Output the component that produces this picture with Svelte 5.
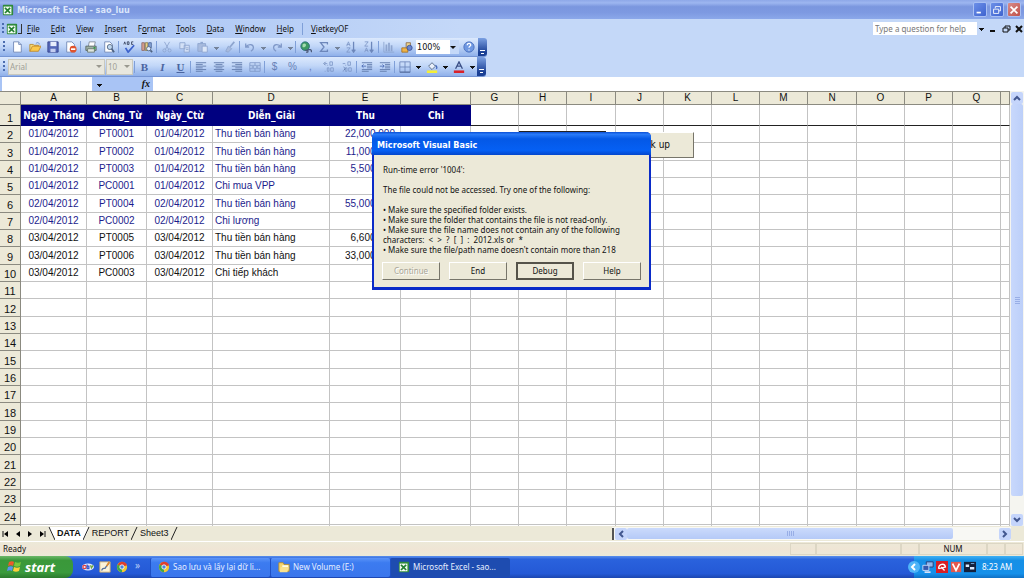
<script lang="ts">
  type Row = { date: string; doc: string; ref: string; note: string; income: string };

  const menus = ['File', 'Edit', 'View', 'Insert', 'Format', 'Tools', 'Data', 'Window', 'Help'];
  const underline: Record<string, number> = { Format: 1 };

  const standardTools = [
    'new', 'open', 'save', 'permission', '|', 'print', 'preview', '|', 'spelling', 'research', '|',
    'cut', 'copy', 'paste', 'v', 'painter', '|', 'undo', 'v', 'redo', 'v', '|',
    'link', 'sum', 'v', 'sortaz', 'sortza', '|', 'chart', 'drawing'
  ];
  const formatTools = [
    '|', 'bold', 'italic', 'underline', '|', 'left', 'center', 'right', 'merge', '|',
    'currency', 'percent', 'comma', 'increase', 'decrease', '|', 'outdent', 'indent', '|',
    'borders', 'V', 'fill', 'V', 'fontcolor', 'V'
  ];

  const letters = 'ABCDEFGHIJKLMNOPQ'.split('');
  const heads = ['Ngày_Tháng', 'Chứng_Từ', 'Ngày_Ctừ', 'Diễn_Giải', 'Thu', 'Chi'];

  const rows: Row[] = [
    { date: '01/04/2012', doc: 'PT0001', ref: '01/04/2012', note: 'Thu tiền bán hàng', income: '22,000,000' },
    { date: '01/04/2012', doc: 'PT0002', ref: '01/04/2012', note: 'Thu tiền bán hàng', income: '11,000,000' },
    { date: '01/04/2012', doc: 'PT0003', ref: '01/04/2012', note: 'Thu tiền bán hàng', income: '5,500,000' },
    { date: '01/04/2012', doc: 'PC0001', ref: '01/04/2012', note: 'Chi mua VPP', income: '' },
    { date: '02/04/2012', doc: 'PT0004', ref: '02/04/2012', note: 'Thu tiền bán hàng', income: '55,000,000' },
    { date: '02/04/2012', doc: 'PC0002', ref: '02/04/2012', note: 'Chi lương', income: '' },
    { date: '03/04/2012', doc: 'PT0005', ref: '03/04/2012', note: 'Thu tiền bán hàng', income: '6,600,000' },
    { date: '03/04/2012', doc: 'PT0006', ref: '03/04/2012', note: 'Thu tiền bán hàng', income: '33,000,000' },
    { date: '03/04/2012', doc: 'PC0003', ref: '03/04/2012', note: 'Chi tiếp khách', income: '' }
  ];
  const blank: Row = { date: '', doc: '', ref: '', note: '', income: '' };
  const sheetRows = Array.from({ length: 23 }, (_, i) => rows[i] ?? blank);
  const spare = Array.from({ length: 12 });

  const tasks = [
    { icon: 'chrome', text: 'Sao lưu và lấy lại dữ li...', active: false },
    { icon: 'folder', text: 'New Volume (E:)', active: false },
    { icon: 'excel', text: 'Microsoft Excel - sao...', active: true }
  ];
</script>

{#snippet icon(name: string)}
  <svg class="icon" viewBox="0 0 14 14" aria-hidden="true">
    {#if name === 'excel'}
      <rect x="1" y="1" width="12" height="12" rx="1" fill="#2f8a3c" />
      <rect x="2" y="3" width="9" height="9" fill="#f2fbf2" />
      <path d="M3.500 4.500l6 6M9.500 4.500l-6 6" stroke="#258032" stroke-width="2" />
    {:else if name === 'new'}
      <path d="M3 1h6l3 3v9H3z" fill="#fff" stroke="#6c84b4" />
      <path d="M9 1v3h3" fill="#cddcf4" stroke="#6c84b4" />
    {:else if name === 'open'}
      <path d="M1 12V4h4l1 1h5v2" fill="#f7dc7a" stroke="#b98a2a" />
      <path d="M1 12l3-6h10l-3 6z" fill="#fbc94b" stroke="#c0882a" />
      <path d="M8 3c2-2 4-1 4 1" fill="none" stroke="#5b84c4" />
    {:else if name === 'save'}
      <path d="M1 1h12v12H1z" fill="#5468b8" stroke="#33408a" />
      <path d="M4 1h7v5H4z" fill="#e8eefc" />
      <path d="M4 9h6v4H4z" fill="#c3cdf0" />
    {:else if name === 'permission'}
      <path d="M2 1h6l3 3v9H2z" fill="#fff" stroke="#6c84b4" />
      <circle cx="9.500" cy="9.500" r="4" fill="#e0532d" />
      <path d="M7 9.500h5" stroke="#fff" stroke-width="2" />
    {:else if name === 'print'}
      <path d="M4 6l1-5h7l-1 5" fill="#fff" stroke="#7b8794" />
      <path d="M1 6h12v5H1z" fill="#9fb1a5" stroke="#56655f" />
      <path d="M3 9h8v4H3z" fill="#dfe7df" stroke="#68766e" />
      <path d="M10 8h2" stroke="#2fa044" stroke-width="2" />
    {:else if name === 'preview'}
      <path d="M2 1h6l3 3v9H2z" fill="#fff" stroke="#6c84b4" />
      <circle cx="8" cy="7" r="3" fill="#bfd7ee" stroke="#4e6280" />
      <path d="M10 9l3 4" stroke="#4e6280" stroke-width="2" />
    {:else if name === 'spelling'}
      <path d="M1 4l1-3 1 3M5 1v3h2V1zM12 1h-2v3h2" fill="none" stroke="#35405c" />
      <path d="M3 8l3 5 7-8" fill="none" stroke="#3c62cc" stroke-width="2" />
    {:else if name === 'research'}
      <path d="M1 2h3v9H1z" fill="#d9a08f" stroke="#8b6a6a" />
      <path d="M5 2h3v9H5z" fill="#e9d089" stroke="#8b7d4b" />
      <path d="M9 2h3v6H9z" fill="#8ba9dc" stroke="#47639a" />
      <circle cx="9" cy="9" r="2.500" fill="#e4eefb" stroke="#4e6280" />
      <path d="M11 11l2 2" stroke="#4e6280" stroke-width="2" />
    {:else if name === 'cut'}
      <path d="M4 1l5 9M10 1L5 10" stroke="#8ea5cf" fill="none" />
      <circle cx="4" cy="11" r="1.800" fill="none" stroke="#8ea5cf" />
      <circle cx="10" cy="11" r="1.800" fill="none" stroke="#8ea5cf" />
    {:else if name === 'copy'}
      <path d="M1 2h6v7H1zM6 5h6v8H6z" fill="#d3e0f6" stroke="#8ea5cf" />
      <path d="M8 8h3M8 10h3" stroke="#8ea5cf" />
    {:else if name === 'paste'}
      <path d="M1 3h9v9H1z" fill="#a8bbde" stroke="#8ea5cf" />
      <path d="M4 1h3v2H4z" fill="#8ea5cf" />
      <path d="M6 6h6v7H6z" fill="#dce7f8" stroke="#8ea5cf" />
    {:else if name === 'painter'}
      <path d="M12 1L7 7" stroke="#8ea5cf" stroke-width="2" />
      <path d="M5 6l4 3-4 4-3-1z" fill="#a8bbde" stroke="#8ea5cf" />
    {:else if name === 'undo'}
      <path d="M2 3v4h4M2 7c3-4 9-4 9 1 0 2-1 3-3 4" fill="none" stroke="#7f98c8" stroke-width="1.500" />
    {:else if name === 'redo'}
      <path d="M12 3v4H8M12 7C9 3 3 3 3 8c0 2 1 3 3 4" fill="none" stroke="#7f98c8" stroke-width="1.500" />
    {:else if name === 'link'}
      <circle cx="6" cy="6" r="5" fill="#3e9a63" stroke="#286c7c" />
      <path d="M3 4c2-2 4-1 4 1S4 8 3 7z" fill="#a5dcb0" />
      <path d="M6 11h3a2 2 0 010 2H7M9 10h3a2 2 0 011 3" fill="none" stroke="#4c5a78" stroke-width="1.500" />
    {:else if name === 'sum'}
      <path d="M11 4V2H3l4 5-4 5h8v-2" fill="none" stroke="#6d87bb" stroke-width="1.500" />
    {:else if name === 'sortaz' || name === 'sortza'}
      <path d={name === 'sortaz' ? 'M2 6l2-5 2 5M2 4h3M2 8h4l-4 5h4' : 'M2 1h4L2 6h4M2 13l2-5 2 5M3 11h3'} fill="none" stroke="#7f98c8" />
      <path d="M10 1v11M8 10l2 3 2-3" fill="none" stroke="#6d87bb" stroke-width="1.500" />
    {:else if name === 'chart'}
      <path d="M1 1v12h12" fill="none" stroke="#8ea5cf" />
      <path d="M4 4v8M7 2v10M10 5v7" stroke="#8ea5cf" stroke-width="2" />
    {:else if name === 'drawing'}
      <path d="M1 8h7v5H1z" fill="#f0b449" stroke="#a56f1e" />
      <path d="M6 2h5v6H6z" fill="#efd48b" stroke="#8b6d4a" />
      <circle cx="10" cy="8" r="3" fill="#6a86cf" stroke="#3c5196" />
    {:else if name === 'help'}
      <circle cx="7" cy="7" r="6" fill="#6f98e2" stroke="#4a6fbb" />
      <path d="M5 5c0-3 4-3 4 0 0 1-2 1-2 3M7 10v1" fill="none" stroke="#fff" stroke-width="1.500" />
    {:else if name === 'left' || name === 'center' || name === 'right'}
      <path d="M1 2h12M1 6h12M1 10h12" stroke="#5f78aa" />
      <path d={name === 'left' ? 'M1 4h8M1 8h8M1 12h8' : name === 'center' ? 'M3 4h8M3 8h8M3 12h8' : 'M5 4h8M5 8h8M5 12h8'} stroke="#5f78aa" />
    {:else if name === 'merge'}
      <path d="M1 2h12v10H1zM1 5h12M1 9h12M7 2v3M7 9v3" fill="none" stroke="#7f98c8" />
      <path d="M3 7h3M11 7H8" stroke="#5f78aa" />
    {:else if name === 'increase' || name === 'decrease'}
      <path d="M8 1h3v4H8zM5 5h1M2 3h3M9 8h3v4H9zM5 8h2v4H5zM2 12h1" fill="none" stroke="#7f98c8" />
      <path d={name === 'increase' ? 'M3 1L1 3l2 2' : 'M3 7l2 2-2 2'} fill="none" stroke="#5f78aa" />
    {:else if name === 'outdent' || name === 'indent'}
      <path d="M1 2h12M7 4h6M7 6h6M7 8h6M1 10h12M1 12h8" stroke="#5f78aa" />
      <path d={name === 'outdent' ? 'M6 6H1M3 4L1 6l2 2' : 'M1 6h5M4 4l2 2-2 2'} fill="none" stroke="#4a69b4" />
    {:else if name === 'borders'}
      <path d="M1 1h12v12H1zM7 1v12M1 7h12" fill="none" stroke="#6d87bb" />
      <path d="M1 13h12" stroke="#4a5f90" />
    {:else if name === 'fill'}
      <path d="M3 6l4-4 4 4-4 4z" fill="#e9f0fb" stroke="#4e6280" />
      <path d="M11 5c2 1 2 3 1 4" fill="none" stroke="#3f63b8" stroke-width="1.500" />
      <path d="M1 11h12v3H1z" fill="#f4ee36" />
    {:else if name === 'fontcolor'}
      <path d="M3 9l4-8 4 8M5 6h4" fill="none" stroke="#3b4f86" stroke-width="1.500" />
      <path d="M1 11h12v3H1z" fill="#d8202a" />
    {:else if name === 'chrome'}
      <circle cx="7" cy="7" r="6" fill="#f2c832" />
      <path d="M7 7L2 4a6 6 0 0110-1l1 2z" fill="#dd3f2f" />
      <path d="M7 7v6A6 6 0 012 4z" fill="#3da64c" />
      <circle cx="7" cy="7" r="2.500" fill="#4b83e0" stroke="#fff" />
    {:else if name === 'folder'}
      <path d="M1 2h5l1 2h6v8H1z" fill="#f4d56c" stroke="#b48c30" />
      <path d="M5 5h7v5H5z" fill="#fffbe4" />
      <path d="M3 7h9l-1 6H2z" fill="#f9e28e" />
    {:else if name === 'ebay'}
      <ellipse cx="7" cy="7" rx="7" ry="4" fill="#e6ebff" />
      <circle cx="3" cy="7" r="2" fill="none" stroke="#e04040" stroke-width="1.500" />
      <path d="M6 4v5h2V6H6" fill="none" stroke="#3058d0" stroke-width="1.500" />
      <path d="M10 5l1 3 2-3" fill="none" stroke="#69a63a" stroke-width="1.500" />
    {:else if name === 'pencil'}
      <path d="M1 1h12v12H1z" fill="#fbf3da" stroke="#c8a96c" />
      <path d="M3 11c2-5 4 0 5-4l4-5" fill="none" stroke="#56709c" stroke-width="1.500" />
      <path d="M9 6l3-5" stroke="#e28b2c" stroke-width="2" />
    {:else if name === 'network'}
      <path d="M5 1h8v6H5z" fill="#8eb6ee" stroke="#1e3570" />
      <path d="M1 5h7v6H1z" fill="#3458ac" stroke="#d5e2fa" />
      <path d="M3 13h7" stroke="#d5e2fa" stroke-width="2" />
    {:else if name === 'umbrella'}
      <path d="M0 0h14v14H0z" fill="#d81e24" />
      <path d="M3 9c0-6 7-7 8-2L3 9M6 7l4 4" fill="none" stroke="#fff" stroke-width="1.500" />
    {:else if name === 'vkey'}
      <path d="M1 1h12v12H1z" fill="#e4574c" />
      <path d="M3 3l4 8 4-8" fill="none" stroke="#fff" stroke-width="2" />
    {:else if name === 'volume'}
      <path d="M0 1h14v12H0z" fill="#14203c" />
      <path d="M2 4h4v3H2zM7 7h5v3H7z" fill="#d8e8fc" />
      <path d="M8 3h4" stroke="#7fc0f2" />
    {/if}
  </svg>
{/snippet}

{#snippet tools(list: string[])}
  {#each list as tool}
    {#if tool === '|'}
      <span class="sep"></span>
    {:else if tool === 'v' || tool === 'V'}
      <button class="drop" class:dim={tool === 'v'} aria-label="More"></button>
    {:else}
      <button class="tool {tool}" aria-label={tool}>
        {#if tool === 'bold'}B{:else if tool === 'italic'}I{:else if tool === 'underline'}U{:else if tool === 'currency'}${:else if tool === 'percent'}%{:else if tool === 'comma'},{:else}{@render icon(tool)}{/if}
      </button>
    {/if}
  {/each}
{/snippet}

{#snippet chevron(d: string)}
  <svg class="chevron" viewBox="0 0 8 8" aria-hidden="true"><path {d} fill="none" stroke="#42578f" stroke-width="2" /></svg>
{/snippet}

<div class="screen">
  <header class="titlebar">
    {@render icon('excel')}
    <h1>Microsoft Excel - sao_luu</h1>
    <button class="win" aria-label="Minimize"><svg viewBox="0 0 14 14"><path d="M3 10h5" stroke="#fff" stroke-width="2" /></svg></button>
    <button class="win" aria-label="Restore"><svg viewBox="0 0 14 14"><path d="M5 5V3h6v5H9M3 6h6v5H3z" fill="none" stroke="#fff" /></svg></button>
    <button class="win close" aria-label="Close"><svg viewBox="0 0 14 14"><path d="M3 3l8 8M11 3l-8 8" stroke="#fff" stroke-width="2" /></svg></button>
  </header>

  <nav class="menubar">
    <span class="grip"></span>
    {@render icon('excel')}
    <span class="bracket"></span>
    {#each menus as menu}
      {@const at = underline[menu] ?? 0}
      <button class="menu">{menu.slice(0, at)}<u>{menu[at]}</u>{menu.slice(at + 1)}</button>
    {/each}
    <span class="sep"></span>
    <button class="menu"><u>V</u>ietkeyOF</button>
    <input class="ask" aria-label="Type a question for help" placeholder="Type a question for help" />
    <button class="drop" aria-label="Recent questions"></button>
    <button class="mini" aria-label="Minimize workbook"><svg viewBox="0 0 10 10"><path d="M2 7h5" stroke="#111" stroke-width="2" /></svg></button>
    <button class="mini" aria-label="Restore workbook"><svg viewBox="0 0 10 10"><path d="M4 4V2h5v4H7M2 4h5v4H2z" fill="none" stroke="#111" /></svg></button>
    <button class="mini" aria-label="Close workbook"><svg viewBox="0 0 10 10"><path d="M2 2l6 6M8 2L2 8" stroke="#111" stroke-width="2" /></svg></button>
  </nav>

  <div class="bars">
    <div class="toolbar">
      <span class="grip"></span>
      {@render tools(standardTools)}
      <span class="combo zoom"><select aria-label="Zoom"><option>100%</option></select></span>
      <button class="tool" aria-label="help">{@render icon('help')}</button>
      <button class="end" aria-label="Toolbar options"></button>
    </div>
    <div class="toolbar">
      <span class="grip"></span>
      <span class="combo font"><select aria-label="Font" disabled><option>Arial</option></select></span>
      <span class="combo size"><select aria-label="Font size" disabled><option>10</option></select></span>
      {@render tools(formatTools)}
      <button class="end" aria-label="Toolbar options"></button>
    </div>
  </div>

  <div class="formula">
    <input class="namebox" aria-label="Name box" />
    <button class="drop" aria-label="Names"></button>
    <button class="fx" aria-label="Insert function">fx</button>
    <input class="entry" aria-label="Formula" />
  </div>

  <main class="work">
    <div class="sheet">
      <table>
        <colgroup>
          <col class="w-row" /><col class="w-a" /><col class="w-b" /><col class="w-a" /><col class="w-d" /><col class="w-e" /><col class="w-f" />
          {#each letters.slice(6) as _, i}<col class={i % 5 === 2 ? 'w-n wide' : 'w-n'} />{/each}
          <col />
        </colgroup>
        <thead>
          <tr><th></th>{#each letters as letter}<th scope="col">{letter}</th>{/each}<th></th></tr>
        </thead>
        <tbody>
          <tr class="heads">
            <th scope="row">1</th>
            {#each heads as head}<td class="head">{head}</td>{/each}
            {#each spare as _}<td></td>{/each}
          </tr>
          {#each sheetRows as row, i}
            <tr class:saved={i < 6}>
              <th scope="row">{i + 2}</th>
              <td class="mid">{row.date}</td>
              <td class="mid">{row.doc}</td>
              <td class="mid">{row.ref}</td>
              <td>{row.note}</td>
              <td class="num">{row.income}</td>
              <td></td>
              {#each spare as _}<td></td>{/each}
            </tr>
          {/each}
          <tr>
            <th></th>
            {#each letters as _}<td></td>{/each}
            <td></td>
          </tr>
        </tbody>
      </table>
      <button class="macro restore" aria-label="Restore"></button>
      <button class="macro backup">Back up</button>
    </div>
    <div class="vscroll">
      <button class="arrow" aria-label="Scroll up">{@render chevron('M1 6l3-3 3 3')}</button>
      <span class="thumb"></span>
      <span class="track"></span>
      <button class="arrow" aria-label="Scroll down">{@render chevron('M1 2l3 3 3-3')}</button>
    </div>
  </main>

  <div class="tabs">
    <button class="nav" aria-label="First sheet"><svg viewBox="0 0 8 8"><path d="M1 1v6" stroke="#111" /><path d="M6 1v6L2 4z" /></svg></button>
    <button class="nav" aria-label="Previous sheet"><svg viewBox="0 0 8 8"><path d="M6 1v6L2 4z" /></svg></button>
    <button class="nav" aria-label="Next sheet"><svg viewBox="0 0 8 8"><path d="M2 1v6l4-3z" /></svg></button>
    <button class="nav" aria-label="Last sheet"><svg viewBox="0 0 8 8"><path d="M7 1v6" stroke="#111" /><path d="M2 1v6l4-3z" /></svg></button>
    <svg class="slant" viewBox="0 0 7 13"><path d="M0 0h7v13z" fill="#fff" /><path d="M1 0l6 13" stroke="#222" /></svg>
    <button class="tab current">DATA</button>
    <svg class="slant" viewBox="0 0 7 13"><path d="M0 0h7L1 13H0z" fill="#fff" /><path d="M6 0L0 13" stroke="#222" /></svg>
    <button class="tab">REPORT</button>
    <svg class="slant" viewBox="0 0 7 13"><path d="M6 0L0 13" stroke="#222" /></svg>
    <button class="tab">Sheet3</button>
    <svg class="slant" viewBox="0 0 7 13"><path d="M6 0L0 13" stroke="#222" /></svg>
    <div class="hscroll">
      <span class="split"></span>
      <button class="arrow" aria-label="Scroll left">{@render chevron('M6 1L3 4l3 3')}</button>
      <span class="thumb"></span>
      <span class="track"></span>
      <button class="arrow" aria-label="Scroll right">{@render chevron('M2 1l3 3-3 3')}</button>
    </div>
  </div>

  <footer class="status">
    <span class="ready">Ready</span>
    <span class="cell c1"></span><span class="cell c2"></span><span class="cell c3"></span>
    <span class="cell c4">NUM</span><span class="cell c3"></span><span class="cell c3"></span>
  </footer>

  <div class="taskbar">
    <button class="start">
      <svg viewBox="0 0 16 16" aria-hidden="true">
        <path d="M2 3c2-1 4-1 5 0L6 7C5 6 3 6 1 7z" fill="#ee5a2c" />
        <path d="M8 3c2 1 4 1 6 0l-1 4c-2 1-4 1-6 0z" fill="#7cc83c" />
        <path d="M1 8c2-1 4-1 5 0l-1 4c-1-1-3-1-5 0z" fill="#5a94f0" />
        <path d="M7 8c2 1 4 1 6 0l-1 4c-2 1-4 1-6 0z" fill="#fbd03a" />
      </svg>
      start
    </button>
    <div class="quick">
      {@render icon('ebay')}{@render icon('pencil')}{@render icon('chrome')}<span class="more">»</span>
    </div>
    {#each tasks as task}
      <button class="task" class:active={task.active}>{@render icon(task.icon)}<span>{task.text}</span></button>
    {/each}
    <div class="tray">
      <button class="expand" aria-label="Show hidden icons"><svg viewBox="0 0 12 12"><circle cx="6" cy="6" r="6" fill="#4fb4f8" /><path d="M7 3L4 6l3 3" fill="none" stroke="#fff" stroke-width="2" /></svg></button>
      {@render icon('network')}{@render icon('umbrella')}{@render icon('vkey')}{@render icon('volume')}
      <time>8:23 AM</time>
    </div>
  </div>

  <div class="dialog" role="dialog" aria-labelledby="dialog-title">
    <h2 id="dialog-title">Microsoft Visual Basic</h2>
    <div class="message">
      <p>Run-time error '1004':</p>
      <p>The file could not be accessed. Try one of the following:</p>
      <p>
        • Make sure the specified folder exists.<br />
        • Make sure the folder that contains the file is not read-only.<br />
        • Make sure the file name does not contain any of the following<br />
        characters:&nbsp; &lt; &nbsp;&gt; &nbsp;? &nbsp;[ &nbsp;] &nbsp;: &nbsp;2012.xls or &nbsp;*<br />
        • Make sure the file/path name doesn't contain more than 218
      </p>
    </div>
    <div class="actions">
      <button disabled>Continue</button>
      <button>End</button>
      <button class="default">Debug</button>
      <button>Help</button>
    </div>
  </div>
</div>

<style>
  :global(body) {
    margin: 0;
  }

  .screen {
    --ui: "Noto Sans", "Open Sans", sans-serif;
    --strong: "DejaVu Sans Condensed", "DejaVu Sans", sans-serif;
    --cells: "Liberation Sans", Arial, sans-serif;
    --face: #ece9d8;
    position: relative;
    display: flex;
    flex-direction: column;
    height: 100vh;
    overflow: hidden;
    background: #fff;
    color: #111;
    font: 8px/12px var(--ui);
  }

  button,
  input,
  select {
    box-sizing: border-box;
    margin: 0;
    padding: 0;
    border: 0;
    border-radius: 0;
    background: none;
    color: inherit;
    font: inherit;
  }

  svg {
    display: block;
  }

  .icon {
    flex: none;
    width: 12px;
    height: 12px;
  }

  .titlebar {
    display: flex;
    align-items: center;
    gap: 3px;
    height: 19px;
    padding: 0 3px 0 2px;
    background: linear-gradient(#8ea8e8, #9db6f0 15%, #7b97df 35%, #7d99e1 65%, #8ba8ea);
  }

  h1 {
    flex: 1;
    margin: 0;
    color: #dbe6fb;
    font: bold 9px/14px var(--strong);
  }

  .win {
    width: 14px;
    height: 15px;
    border: 1px solid #a9c0f4;
    border-radius: 2px;
    background: linear-gradient(135deg, #6c8fe8, #3e63cf);
  }

  .win.close {
    background: linear-gradient(135deg, #d88c88, #c0504a);
  }

  .menubar {
    display: flex;
    align-items: center;
    height: 19px;
    padding-left: 1px;
    background: linear-gradient(90deg, #a4c0f3, #c4d8f8 45%);
  }

  .grip {
    width: 2px;
    height: 12px;
    margin: 0 2px 0 1px;
    background: repeating-linear-gradient(#4a6cb0 0 2px, transparent 2px 4px);
  }

  .bracket {
    width: 3px;
    height: 9px;
    border: solid #333;
    border-width: 0 1px 1px 0;
  }

  .menu {
    margin-left: 11px;
  }

  .bracket + .menu {
    margin-left: 5px;
  }

  .sep {
    flex: none;
    width: 1px;
    height: 12px;
    background: #7f9fd8;
  }

  .menubar .sep {
    margin-left: 8px;
  }

  .sep + .menu {
    margin-left: 8px;
  }

  .ask {
    width: 104px;
    height: 13px;
    margin-left: auto;
    padding: 0 2px;
    background: #fff;
  }

  .ask::placeholder {
    color: #777;
    opacity: 1;
  }

  .drop {
    flex: none;
    width: 8px;
    height: 13px;
    background: linear-gradient(#111, #111) center 6px / 5px 1px no-repeat, linear-gradient(#111, #111) center 7px / 3px 1px no-repeat,
      linear-gradient(#111, #111) center 8px / 1px 1px no-repeat;
  }

  .drop.dim {
    opacity: 0.4;
  }

  .mini {
    width: 13px;
    padding-left: 3px;
  }

  .mini svg {
    width: 10px;
    height: 10px;
  }

  .bars {
    background: #c4d8f8;
  }

  .toolbar {
    display: flex;
    align-items: center;
    gap: 1px;
    width: max-content;
    height: 19px;
    padding-left: 2px;
    border-bottom: 1px solid #7595d4;
    border-radius: 0 3px 3px 0;
    background: linear-gradient(#dce9fd, #c2d7f8 45%, #8fb0ea);
    box-sizing: border-box;
  }

  .toolbar + .toolbar {
    height: 20px;
  }

  .tool {
    display: grid;
    place-items: center;
    flex: none;
    width: 17px;
    height: 16px;
    color: #6580b5;
    font: 10px/14px var(--cells);
  }

  .bold,
  .italic,
  .underline {
    color: #4a64a0;
    font: bold 11px/14px "Liberation Serif", serif;
  }

  .italic {
    font-style: italic;
  }

  .underline {
    text-decoration: underline;
  }

  .end {
    align-self: stretch;
    width: 9px;
    border-radius: 0 3px 3px 0;
    background: linear-gradient(#fff, #fff) center 12px / 5px 1px no-repeat, linear-gradient(#fff, #fff) center 15px / 3px 1px no-repeat,
      linear-gradient(#7ba0e2, #1a3f94 80%);
  }

  .combo {
    position: relative;
    flex: none;
    height: 14px;
  }

  .combo::after {
    content: "";
    position: absolute;
    top: 6px;
    right: 3px;
    border: solid transparent;
    border-width: 3px 3px 0;
    border-top-color: #111;
    pointer-events: none;
  }

  .combo select {
    display: block;
    width: 100%;
    height: 100%;
    padding-left: 1px;
    appearance: none;
    border: 1px solid #c9c8bd;
    background: #e8e7de;
    color: #a09f97;
    opacity: 1;
  }

  .font,
  .size {
    height: 16px;
  }

  .font::after,
  .size::after {
    border-top-color: #9a998f;
  }

  .font {
    width: 97px;
  }

  .size {
    width: 27px;
  }

  .zoom {
    width: 43px;
  }

  .zoom select {
    border: 0;
    background: linear-gradient(90deg, #fff 34px, #c4d8f8 34px);
    color: #111;
    font: 9px/14px var(--strong);
  }

  .formula {
    display: flex;
    align-items: center;
    height: 14px;
    padding-left: 2px;
    background: #a9c4f5;
  }

  .namebox {
    width: 90px;
    height: 14px;
    background: #fff;
  }

  .formula .drop {
    margin-left: 3px;
  }

  .fx {
    width: 50px;
    padding-right: 3px;
    text-align: right;
    font: italic bold 10px/14px "Liberation Serif", serif;
  }

  .entry {
    flex: 1;
    height: 14px;
    background: #fff;
  }

  .work {
    display: flex;
    flex: 1;
    min-height: 0;
  }

  .sheet {
    position: relative;
    flex: 1;
    overflow: hidden;
    border-top: 1px solid #8b8a80;
  }

  table {
    width: 100%;
    table-layout: fixed;
    border-collapse: separate;
    border-spacing: 0;
    font: 10px/14px var(--cells);
  }

  .w-row {
    width: 21px;
  }

  .w-a {
    width: 66px;
  }

  .w-b {
    width: 60px;
  }

  .w-d {
    width: 117px;
  }

  .w-e {
    width: 71px;
  }

  .w-f {
    width: 70px;
  }

  .w-n {
    width: 48px;
  }

  .w-n.wide {
    width: 49px;
  }

  td,
  th {
    box-sizing: border-box;
    height: 17px;
    padding: 0 2px;
    border: solid #c3c3c3;
    border-width: 0 1px 1px 0;
    white-space: nowrap;
    line-height: 14px;
  }

  th {
    padding: 0;
    border-color: #8b8a80;
    background: var(--face);
    font: 11px/13px var(--cells);
    text-align: center;
    vertical-align: bottom;
  }

  tbody tr:nth-child(3n) > * {
    height: 18px;
  }

  thead th {
    height: 13px;
    font-size: 10px;
    line-height: 12px;
  }

  tbody .heads > * {
    height: 21px;
    border-bottom-color: #222;
  }

  .head {
    border: 0;
    background: #000080;
    color: #fff;
    font: bold 10px/14px var(--strong);
    text-align: center;
  }

  .saved td {
    color: #1c1c8c;
  }

  .mid {
    text-align: center;
  }

  .num {
    padding-right: 5px;
    text-align: right;
  }

  .macro {
    position: absolute;
    top: 40px;
    height: 26px;
    border: 1px solid;
    border-color: #fff #77756a #77756a #fff;
    background: var(--face);
    font: 10px/14px var(--strong);
  }

  .restore {
    top: 39px;
    left: 519px;
    width: 87px;
    border-color: #222;
  }

  .backup {
    left: 610px;
    width: 84px;
  }

  .vscroll {
    display: flex;
    flex-direction: column;
    padding: 1px 1px 0;
    background: #f5f5f0;
  }

  .arrow {
    display: grid;
    place-items: center;
    flex: none;
    width: 12px;
    height: 12px;
    border-radius: 2px;
    background: #c5d5fb;
  }

  .chevron {
    width: 8px;
    height: 8px;
  }

  .thumb {
    border-radius: 2px;
    background: repeating-linear-gradient(#98aee6 0 1px, transparent 1px 2px) center / 5px 7px no-repeat,
      linear-gradient(90deg, #c8d8fc, #bccff9);
  }

  .vscroll .thumb {
    flex: 392;
    width: 12px;
  }

  .vscroll .track {
    flex: 18;
  }

  .tabs {
    display: flex;
    align-items: center;
    height: 15px;
    border-bottom: 1px solid #fff;
    background: var(--face);
  }

  .nav {
    flex: none;
    width: 12px;
    padding-left: 2px;
  }

  .nav svg {
    width: 8px;
    height: 8px;
  }

  .slant {
    flex: none;
    width: 7px;
    height: 13px;
  }

  .tab {
    padding: 0 2px;
    font: 9px/13px var(--cells);
  }

  .current {
    background: #fff;
    font-weight: bold;
  }

  .hscroll {
    display: flex;
    align-items: center;
    width: 39%;
    height: 13px;
    margin: 0 13px 0 auto;
    background: #f8f8f4;
  }

  .split {
    width: 2px;
    height: 12px;
    margin-right: 1px;
    background: #555;
  }

  .hscroll .thumb {
    flex: 330;
    height: 11px;
    background: repeating-linear-gradient(90deg, #98aee6 0 1px, transparent 1px 2px) center / 7px 5px no-repeat,
      linear-gradient(#cbdafc, #b5caf7);
  }

  .hscroll .track {
    flex: 46;
  }

  .status {
    display: flex;
    align-items: center;
    height: 14px;
    padding-right: 1px;
    background: linear-gradient(#ece9d8, #efe5d5 50%, #ece9d8);
  }

  .ready {
    flex: 1;
    padding-left: 3px;
  }

  .cell {
    box-sizing: border-box;
    height: 12px;
    border: 1px solid #dcd6c4;
    line-height: 10px;
    text-align: center;
  }

  .c1 {
    width: 26px;
  }

  .c2 {
    width: 85px;
  }

  .c3 {
    width: 18px;
  }

  .c4 {
    width: 68px;
  }

  .taskbar {
    display: flex;
    align-items: center;
    height: 22px;
    background: linear-gradient(#5a8fec, #2a62dd 15%, #2459d6 80%, #1c46b0);
    color: #fff;
  }

  .start {
    display: flex;
    align-items: center;
    gap: 2px;
    align-self: stretch;
    width: 73px;
    padding-left: 7px;
    border-radius: 0 8px 8px 0;
    background: linear-gradient(#6cb86a, #3a983a 20%, #3a9a3c 75%, #2b7a2d);
    font: italic bold 13px/18px "Open Sans", sans-serif;
  }

  .start svg {
    width: 16px;
    height: 16px;
  }

  .quick {
    display: flex;
    gap: 5px;
    box-sizing: border-box;
    width: 77px;
    padding-left: 9px;
  }

  .more {
    margin-left: 2px;
    color: #b9cdf8;
    font-size: 10px;
    line-height: 8px;
  }

  .task {
    display: flex;
    align-items: center;
    gap: 3px;
    width: 120px;
    height: 19px;
    padding-left: 7px;
    border-left: 1px solid #1f50c4;
    border-radius: 2px;
    background: linear-gradient(#5b94f8, #3c7bf0 25%, #3a76ec);
    color: #e6efff;
    white-space: nowrap;
  }

  .task.active {
    background: #1e4cb0;
  }

  .tray {
    display: flex;
    align-items: center;
    align-self: stretch;
    gap: 2px;
    box-sizing: border-box;
    width: 110px;
    margin-left: auto;
    background: linear-gradient(#3fb0f4, #1690e6 20%, #1590ea 80%, #1070c4);
  }

  .expand {
    width: 12px;
    height: 12px;
    margin-left: -6px;
  }

  time {
    margin-left: 4px;
  }

  .dialog {
    position: absolute;
    top: 132px;
    left: 372px;
    box-sizing: border-box;
    width: 279px;
    border: solid #0a2bc8;
    border-width: 0 2px 3px;
    border-radius: 5px 5px 0 0;
    background: var(--face);
  }

  h2 {
    margin: 0 -2px;
    padding: 4px 5px 1px;
    border-radius: 5px 5px 0 0;
    background: linear-gradient(#0a4fd6, #2a7bf8 10%, #0458e6 30%, #0560f4 80%, #0447cc);
    color: #fff;
    font: bold 9px/18px var(--strong);
  }

  .message {
    padding: 10px 9px 7px;
    line-height: 10px;
    white-space: nowrap;
  }

  .message p {
    margin: 0 0 10px;
  }

  .message p:last-child {
    margin: 0;
  }

  .actions {
    display: flex;
    gap: 9px;
    padding: 0 8px 7px;
  }

  .actions button {
    width: 58px;
    height: 18px;
    border: 1px solid;
    border-color: #fff #77756a #77756a #fff;
  }

  .actions .default {
    border: 2px solid #55534a;
  }

  .actions button:disabled {
    color: #a9a698;
    text-shadow: 1px 1px #fff;
  }
</style>
